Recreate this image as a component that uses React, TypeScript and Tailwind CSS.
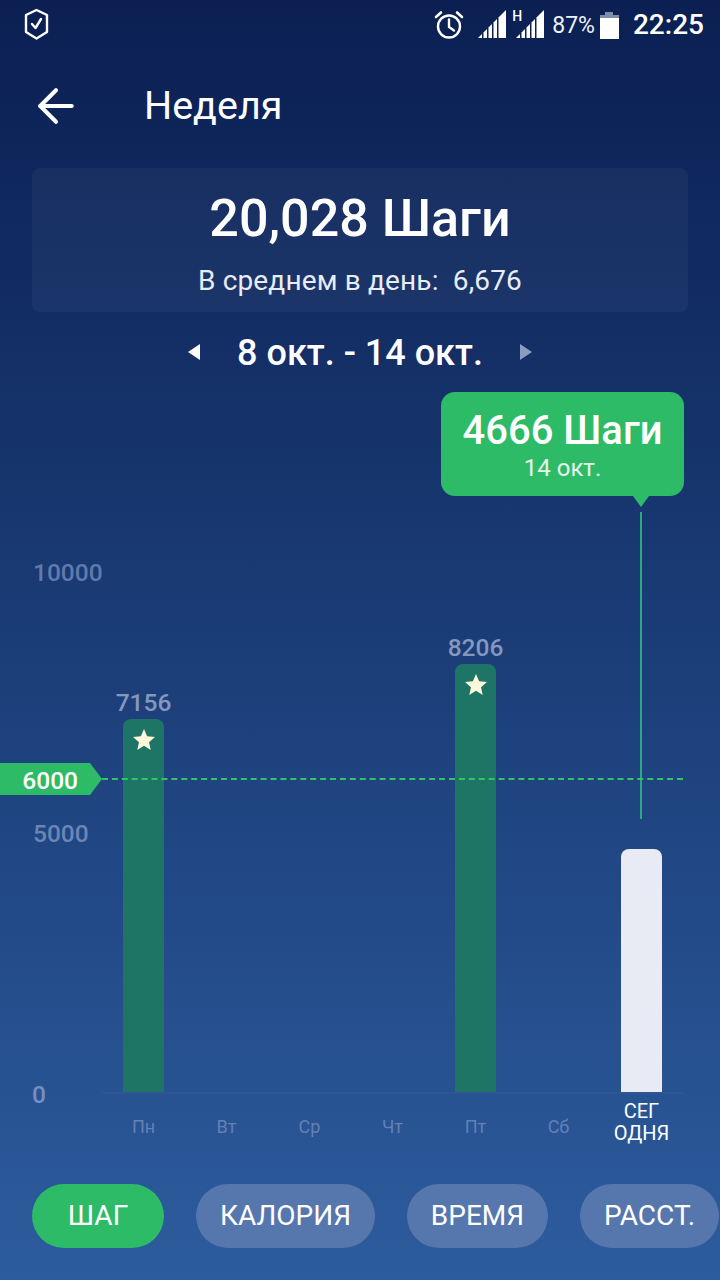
import { ArrowLeft } from "lucide-react"

const days = [
    { label: "Пн", value: "7156", height: 373 },
    { label: "Вт" },
    { label: "Ср" },
    { label: "Чт" },
    { label: "Пт", value: "8206", height: 428 },
    { label: "Сб" },
]

function Signal() {
    return (
        <svg width="30" height="30" viewBox="0 0 30 30" fill="white">
            <path d="M0 29 L4 25 V29 Z" />
            <path d="M5.5 29 V23.5 L9 20 V29 Z" />
            <path d="M10.5 29 V18.5 L14 15 V29 Z" />
            <path d="M15.5 29 V13.5 L19 10 V29 Z" />
            <path d="M20.5 29 V8.5 L28 1 V29 Z" />
        </svg>
    )
}

function Star() {
    return (
        <svg width="22" height="21" viewBox="0 0 24 23" fill="#fdf8dc">
            <path d="M12 0 L15.4 8 L24 8.7 L17.5 14.4 L19.4 23 L12 18.4 L4.6 23 L6.5 14.4 L0 8.7 L8.6 8 Z" />
        </svg>
    )
}

function Pill({ children, active, width }: { children: string; active?: boolean; width: string }) {
    return (
        <div className={`${width} shrink-0 h-16 rounded-[32px] flex items-center justify-center text-[28px] text-white ${active ? "bg-[#2dbb68]" : "bg-[#5677ad]"}`}>
            {children}
        </div>
    )
}

export default function App() {
    return (
        <div className="w-[720px] h-[1280px] flex flex-col overflow-hidden text-white bg-gradient-to-b from-[#0b1f52] to-[#2d5c9e] font-['Roboto',sans-serif]">
            {/* status bar */}
            <div className="h-[50px] shrink-0 flex items-center pl-6 pr-4">
                <svg width="25" height="32" viewBox="0 0 25 32" fill="none" stroke="white" strokeWidth="2.4" strokeLinejoin="round" strokeLinecap="round" className="-mt-[2px]">
                    <path d="M12.5 2 L23 7 V24 L12.5 30.5 L2 24 V7 Z" />
                    <path d="M8 16 L11.5 20 L17 11" />
                </svg>
                <div className="ml-auto flex items-center">
                    <svg width="30" height="30" viewBox="0 0 30 30" fill="none" stroke="white" strokeWidth="2.4" strokeLinecap="round">
                        <circle cx="15" cy="16.5" r="11" />
                        <path d="M15 9.5 V17 L20 20.5" />
                        <path d="M2 7 L7 2.5 M28 7 L23 2.5" strokeWidth="2.6" />
                    </svg>
                    <div className="ml-[14px] flex items-end -mt-[2px]">
                        <Signal />
                        <div className="ml-[8px] relative">
                            <Signal />
                            <span className="absolute -left-[4px] top-0 text-[14px] font-medium leading-none">H</span>
                        </div>
                    </div>
                    <span className="ml-[6px] text-[23px] leading-none text-[#eef1f7]">87%</span>
                    <div className="ml-[5px] w-[19px] h-[27px] flex flex-col items-center">
                        <div className="w-2 h-[3px] bg-[#7d8cab]" />
                        <div className="w-full h-[3px] bg-[#7d8cab]" />
                        <div className="w-full flex-1 bg-white" />
                    </div>
                    <span className="ml-[14px] text-[28px] font-medium leading-none">22:25</span>
                </div>
            </div>

            {/* title */}
            <div className="h-[118px] shrink-0 flex items-center pl-[29px] pb-[6px]">
                <ArrowLeft size={54} strokeWidth={1.8} />
                <h1 className="ml-[61px] text-[39.5px] leading-none">Неделя</h1>
            </div>

            {/* summary */}
            <div className="mx-8 h-36 shrink-0 rounded-lg bg-white/[0.04] flex flex-col items-center">
                <div className="mt-[21px] text-[52px] leading-[60px] font-medium">20,028 Шаги</div>
                <div className="mt-[16px] text-[28px] leading-8 tracking-[0.15px] text-[#e8ecf4] whitespace-pre">В среднем в день:  6,676</div>
            </div>

            {/* date switch */}
            <div className="h-20 shrink-0 flex items-center justify-center">
                <div className="w-0 h-0 border-y-[8px] border-y-transparent border-r-[12px] border-r-white" />
                <span className="mx-[37px] mt-[2px] text-[36px] font-medium leading-none">8 окт. - 14 окт.</span>
                <div className="w-0 h-0 border-y-[8px] border-y-transparent border-l-[12px] border-l-[#8a9cc0]" />
            </div>

            {/* chart */}
            <div className="relative h-[752px] shrink-0">
                {/* y axis */}
                <span className="absolute left-[33px] top-[169px] text-[24.5px] leading-none font-medium text-[#627aab]">10000</span>
                <span className="absolute left-[33px] top-[430px] text-[24.5px] leading-none font-medium text-[#6c85b4]">5000</span>
                <span className="absolute left-[32px] top-[691px] text-[24.5px] leading-none font-medium text-[#7590c0]">0</span>

                {/* goal line */}
                <div className="absolute left-0 top-[371px] w-[102px] h-[32px] pt-[4px] bg-[#2dbb68] [clip-path:polygon(0_0,90px_0,102px_50%,90px_100%,0_100%)] flex items-center justify-end pr-[24px] text-[24.5px] font-medium">
                    6000
                </div>
                <div className="absolute left-[102px] right-[37px] top-[386px] border-t-2 border-dashed border-[#2fc667] z-10" />

                {/* tooltip */}
                <div className="absolute left-[441px] top-0 w-[243px] h-[104px] rounded-[14px] bg-[#2dbb68] flex flex-col items-center">
                    <div className="mt-[16px] text-[40px] leading-[46px] font-medium">4666 Шаги</div>
                    <div className="-mt-[1px] text-[24px] leading-[30px] text-[#e6f7ec]">14 окт.</div>
                    <div className="absolute left-[192px] top-full w-0 h-0 border-x-[8px] border-x-transparent border-t-[11px] border-t-[#2dbb68]" />
                </div>
                <div className="absolute left-[640px] top-[120px] h-[307px] w-[2px] bg-[#2ba97f]" />

                {/* bars */}
                <div className="absolute left-[102px] w-[581px] top-0 h-[702px] flex items-end border-b-2 border-[#2f5596]">
                    {days.map((d) => (
                        <div key={d.label} className="flex-1 flex flex-col items-center">
                            {d.value && (
                                <>
                                    <span className="mb-[1px] text-[24.5px] leading-[30px] font-medium text-[#8497bf]">{d.value}</span>
                                    <div style={{ height: d.height }} className="w-[41px] rounded-t-lg bg-[#1e7566] flex justify-center pt-[10px]">
                                        <Star />
                                    </div>
                                </>
                            )}
                        </div>
                    ))}
                    <div className="flex-1 flex flex-col items-center">
                        <div className="w-[41px] h-[243px] rounded-t-lg bg-[#e8ebf3]" />
                    </div>
                </div>

                {/* day labels */}
                <div className="absolute left-[102px] w-[581px] top-[708px] flex">
                    {days.map((d) => (
                        <div key={d.label} className="flex-1 text-center text-[18px] leading-[24px] pt-[15px] text-[#6480b4]">{d.label}</div>
                    ))}
                    <div className="flex-1 text-center text-[20px] leading-[22px] text-white">СЕГ<br />ОДНЯ</div>
                </div>
            </div>

            {/* metric tabs */}
            <div className="mt-[40px] ml-8 flex gap-8">
                <Pill active width="w-[132px]">ШАГ</Pill>
                <Pill width="w-[179px]">КАЛОРИЯ</Pill>
                <Pill width="w-[141px]">ВРЕМЯ</Pill>
                <Pill width="w-[139px]">РАССТ.</Pill>
            </div>
        </div>
    )
}
